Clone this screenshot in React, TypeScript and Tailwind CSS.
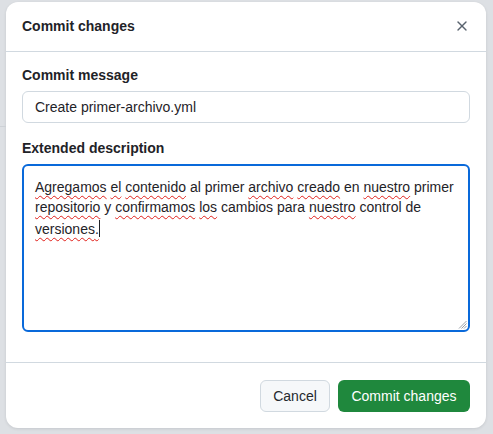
import { X } from "lucide-react";

const squiggle =
  "underline decoration-wavy decoration-[#e0201b] decoration-1 underline-offset-[3px]";

function W({ children }: { children: string }) {
  return <span className={squiggle}>{children}</span>;
}

export default function App() {
  return (
    <div
      className="relative h-[434px] w-[493px] overflow-hidden bg-[#dde0e4] pl-[6px] pt-[2px]"
      style={{ fontFamily: '"Liberation Sans", Arial, sans-serif' }}
    >
      <div className="pointer-events-none absolute left-0 top-[126px] h-px w-[6px] bg-[#cdd1d6]" />
      <div className="flex h-[426px] w-[480px] flex-col rounded-xl bg-white shadow-[0_1px_3px_rgba(31,35,40,0.12)]">
        <header className="flex h-[50px] items-center justify-between border-b border-[#d1d9e0] pb-[2px] pl-4 pr-3">
          <h1 className="text-sm font-bold text-[#1f2328]">Commit changes</h1>
          <button className="flex h-6 w-6 items-center justify-center text-[#59636e]">
            <X size={16} strokeWidth={2} />
          </button>
        </header>

        <main className="flex flex-1 flex-col px-4 pt-[13px]">
          <label className="text-sm font-bold leading-5 text-[#1f2328]">Commit message</label>
          <div className="mt-[6px] flex h-8 items-center rounded-md border border-[#d1d9e0] px-3 text-sm text-[#1f2328]">
            Create primer-archivo.yml
          </div>

          <label className="mt-[15px] text-sm font-bold leading-5 text-[#1f2328]">
            Extended description
          </label>
          <div className="relative mt-[6px] h-[168px] rounded-md border-2 border-[#0969da] px-[11px] pt-[11px] text-sm leading-5 text-[#1f2328]">
            <p>
              <W>Agregamos</W> <W>el</W> <W>contenido</W> al primer <W>archivo</W>{" "}
              <W>creado</W> en <W>nuestro</W> primer
              <br />
              <W>repositorio</W> y <W>confirmamos</W> <W>los</W> cambios para{" "}
              <W>nuestro</W> control de
              <br />
              <W>versiones</W>
              <span className={squiggle}>.</span>
              <span className="inline-block h-[17px] w-px translate-y-[3px] bg-[#1f2328]" />
            </p>
            <svg
              className="absolute bottom-[1px] right-[1px]"
              width="9"
              height="9"
              viewBox="0 0 9 9"
              stroke="#9aa0a6"
              strokeWidth="1"
            >
              <path d="M8.5 1 L1 8.5 M8.5 3.5 L3.5 8.5 M8.5 6 L6 8.5" />
            </svg>
          </div>
        </main>

        <footer className="flex items-center justify-end gap-2 border-t border-[#d1d9e0] p-4 pt-[17px]">
          <button className="h-8 w-[70px] rounded-md border border-[#d1d9e0] bg-[#f6f8fa] text-sm text-[#25292e]">
            Cancel
          </button>
          <button className="h-8 w-[132px] rounded-md bg-[#1f883d] text-sm text-white">
            Commit changes
          </button>
        </footer>
      </div>
    </div>
  );
}
